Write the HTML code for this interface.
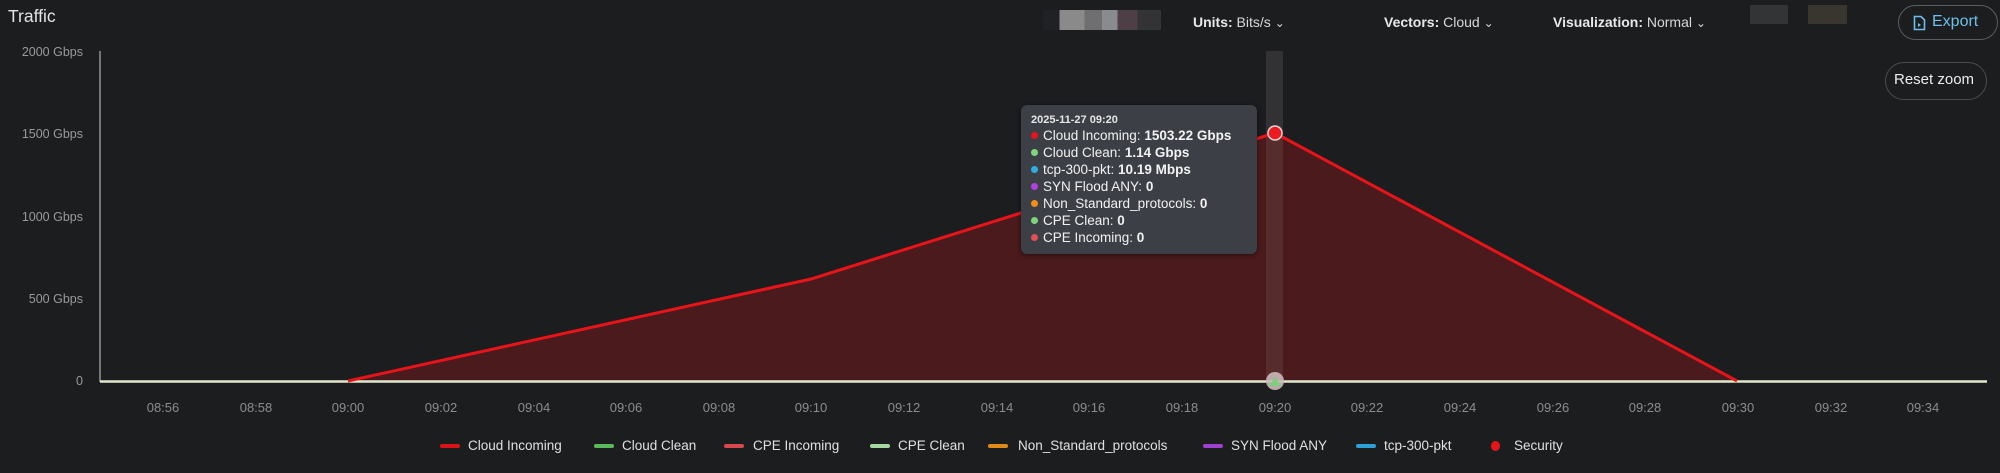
<!DOCTYPE html>
<html><head><meta charset="utf-8"><style>
html,body{margin:0;padding:0;background:#1c1d1f;width:2000px;height:473px;overflow:hidden;font-family:"Liberation Sans",sans-serif;}
.abs{position:absolute;white-space:nowrap}
.hdr{font-size:14px;color:#d8d8d8;top:14px}
.hdr b{color:#e8e8e8}
.tt{position:absolute;left:1021px;top:105px;width:236px;height:149px;background:#3d3f47;border-radius:6px;box-shadow:0 1px 4px rgba(0,0,0,.5);color:#f2f2f2;font-size:13.5px}
.tt div{position:absolute;left:10px;white-space:nowrap}
.tt i{display:inline-block;width:7px;height:7px;border-radius:50%;margin-right:5px;vertical-align:1px}
.lg{position:absolute;top:438px;font-size:13.5px;color:#e0e0e0;white-space:nowrap}
.sw{position:absolute;top:444px;width:20px;height:4px;border-radius:2px}
</style></head><body>
<div class="abs" style="left:8px;top:6px;font-size:17.5px;color:#e4e4e4">Traffic</div>
<div class="abs" style="left:1043px;top:10px;width:118px;height:20px;background:linear-gradient(90deg,#202124 0 14%,#8a8a8a 14% 35%,#6f6f72 35% 50%,#8a8b8f 50% 63%,#4e3f47 63% 80%,#333336 80%)"></div>
<div class="abs hdr" style="left:1193px"><b>Units:</b> Bits/s <span style="font-size:12px">&#8964;</span></div>
<div class="abs hdr" style="left:1384px"><b>Vectors:</b> Cloud <span style="font-size:12px">&#8964;</span></div>
<div class="abs hdr" style="left:1553px"><b>Visualization:</b> Normal <span style="font-size:12px">&#8964;</span></div>
<div class="abs" style="left:1750px;top:5px;width:38px;height:19px;background:#333436"></div>
<div class="abs" style="left:1808px;top:5px;width:39px;height:19px;background:#38362f"></div>
<div class="abs" style="left:1898px;top:5px;width:98px;height:33px;border:1px solid #5a5c60;border-radius:18px;"></div>
<svg class="abs" style="left:1913px;top:15px" width="13" height="16" viewBox="0 0 13 16"><path d="M1.5 1.5h6.5l3.5 3.5v9.5h-10z" fill="none" stroke="#6cc0ea" stroke-width="1.6"/><path d="M5 8l3 2-3 2z" fill="#6cc0ea"/></svg>
<div class="abs" style="left:1932px;top:13px;font-size:16px;color:#6cc0ea">Export</div>
<div class="abs" style="left:1885px;top:62px;width:100px;height:36px;border:1px solid #4a4c50;border-radius:19px;"></div>
<div class="abs" style="left:1894px;top:71px;font-size:15px;color:#ececec">Reset zoom</div>

<svg class="abs" style="left:0;top:0" width="2000" height="473">
<g font-size="12.5" fill="#9a9a9a" text-anchor="end" font-family="Liberation Sans,sans-serif">
<text x="83" y="56">2000 Gbps</text><text x="83" y="138">1500 Gbps</text><text x="83" y="221">1000 Gbps</text><text x="83" y="303">500 Gbps</text><text x="83" y="385">0</text>
</g>
<rect x="1266" y="51" width="17" height="330" fill="#3a3a3c" opacity="0.75"/>
<polygon points="348,381 811,279 1275,133 1737,381" fill="#4a1a1c"/>
<rect x="1266" y="133" width="17" height="248" fill="#5a3132" opacity="0.8"/>
<line x1="100" y1="51" x2="100" y2="382" stroke="#d0d0d0" stroke-width="1"/>
<line x1="100" y1="381.5" x2="1987" y2="381.5" stroke="#dfe8cc" stroke-width="2.5"/>
<polyline points="348,381 811,279 1275,133 1737,381" fill="none" stroke="#e8141a" stroke-width="3"/>
<circle cx="1275" cy="133" r="7" fill="#ee1a22" stroke="#f4d0d0" stroke-width="1.5"/>
<circle cx="1275" cy="381" r="9" fill="#c9b8b8" opacity="0.9"/>
<path d="M1269 386l6-9 6 9z" fill="#7ed07a"/>
<g font-size="13" fill="#8c8c8c" text-anchor="middle" font-family="Liberation Sans,sans-serif">
<text x="163" y="412">08:56</text><text x="256" y="412">08:58</text><text x="348" y="412">09:00</text><text x="441" y="412">09:02</text><text x="534" y="412">09:04</text><text x="626" y="412">09:06</text><text x="719" y="412">09:08</text><text x="811" y="412">09:10</text><text x="904" y="412">09:12</text><text x="997" y="412">09:14</text><text x="1089" y="412">09:16</text><text x="1182" y="412">09:18</text><text x="1275" y="412">09:20</text><text x="1367" y="412">09:22</text><text x="1460" y="412">09:24</text><text x="1553" y="412">09:26</text><text x="1645" y="412">09:28</text><text x="1738" y="412">09:30</text><text x="1831" y="412">09:32</text><text x="1923" y="412">09:34</text>
</g>
</svg>

<div class="tt">
<div style="top:9px;font-size:11px;font-weight:bold;color:#e6e6e6">2025-11-27 09:20</div>
<div style="top:23px"><i style="background:#e8141a"></i>Cloud Incoming: <b>1503.22 Gbps</b></div>
<div style="top:40px"><i style="background:#7fd67a"></i>Cloud Clean: <b>1.14 Gbps</b></div>
<div style="top:57px"><i style="background:#2eaee0"></i>tcp-300-pkt: <b>10.19 Mbps</b></div>
<div style="top:74px"><i style="background:#b040e0"></i>SYN Flood ANY: <b>0</b></div>
<div style="top:91px"><i style="background:#f0901a"></i>Non_Standard_protocols: <b>0</b></div>
<div style="top:108px"><i style="background:#7fd67a"></i>CPE Clean: <b>0</b></div>
<div style="top:125px"><i style="background:#e05058"></i>CPE Incoming: <b>0</b></div>
</div>

<div class="sw" style="left:440px;background:#d81418"></div><div class="lg" style="left:468px">Cloud Incoming</div>
<div class="sw" style="left:594px;background:#5cba5c"></div><div class="lg" style="left:622px">Cloud Clean</div>
<div class="sw" style="left:724px;background:#d84850"></div><div class="lg" style="left:753px">CPE Incoming</div>
<div class="sw" style="left:870px;background:#a8d8a0"></div><div class="lg" style="left:898px">CPE Clean</div>
<div class="sw" style="left:988px;background:#e08a18"></div><div class="lg" style="left:1018px">Non_Standard_protocols</div>
<div class="sw" style="left:1203px;background:#a040d0"></div><div class="lg" style="left:1231px">SYN Flood ANY</div>
<div class="sw" style="left:1356px;background:#2ea0d8"></div><div class="lg" style="left:1384px">tcp-300-pkt</div>
<div class="abs" style="left:1491px;top:441px;width:9px;height:10px;border-radius:50%;background:#e8141a"></div><div class="lg" style="left:1514px">Security</div>
</body></html>
